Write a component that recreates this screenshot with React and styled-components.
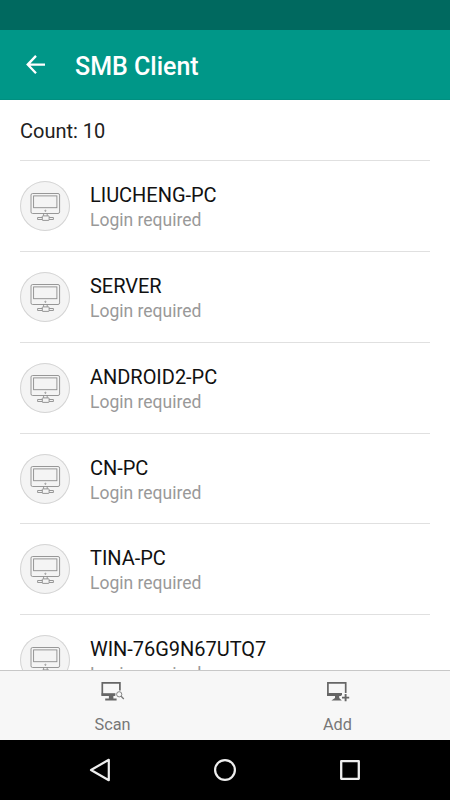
import React from 'react';
import styled, { createGlobalStyle } from 'styled-components';

const hosts = [
  'LIUCHENG-PC',
  'SERVER',
  'ANDROID2-PC',
  'CN-PC',
  'TINA-PC',
  'WIN-76G9N67UTQ7',
];

const BackIcon = () =>
<svg width="20" height="20" viewBox="0 0 20 20" fill="none" stroke="#fff" strokeWidth="2.3">
  <path d="M19 9.6H2.2M10 0.9L1.7 9.6L10 18.3" />
</svg>;

const ComputerIcon = () =>
<svg width="50" height="50" viewBox="0 0 50 50" fill="none" stroke="#8c8c8c" strokeWidth="0.9">
  <rect x="11" y="12.5" width="28.6" height="20" rx="1.6" />
  <rect x="13.6" y="14.9" width="23.3" height="11.8" />
  <circle cx="25.4" cy="29.8" r="0.6" />
  <path d="M23.6 32.6V34.8M27.2 32.6V34.8" />
  <rect x="22.3" y="34.9" width="6.8" height="4.5" rx="0.5" />
  <path d="M22.3 36.5H17.6V38.5H22.3M29.1 36.5H33.4V38.5H29.1" />
</svg>;

const ScanIcon = () =>
<svg width="26" height="24" viewBox="0.6 0 26 24" fill="none" stroke="#666">
  <path d="M20.5 10.5V2.8H2.9V15.2H15.5" strokeWidth="1.7" />
  <path d="M2.2 14.4H16" strokeWidth="2.4" />
  <path d="M9.5 16H14V18.6H17.2V20.4H5.8V18.6H9.5Z" fill="#666" stroke="none" />
  <circle cx="19.8" cy="14.3" r="2.6" stroke="#777" strokeWidth="0.9" />
  <path d="M21.7 16.3L24.4 19" stroke="#777" strokeWidth="1.3" />
</svg>;

const AddIcon = () =>
<svg width="26" height="24" viewBox="0 0 26 24" fill="none" stroke="#666">
  <path d="M20.7 13V2.8H2.9V15.2H16" strokeWidth="1.7" />
  <path d="M2.2 14.2H17" strokeWidth="2.4" />
  <path d="M10 16H14.2V18L16.8 20.6H6.4L10 18Z" fill="#666" stroke="none" />
  <path d="M17 17.6H24.2M20.6 14V21.2" strokeWidth="1.9" />
</svg>;

const NavBackIcon = () =>
<svg width="24" height="26" viewBox="0 0 24 26" fill="none" stroke="#eee" strokeWidth="2.2" strokeLinejoin="round">
  <path d="M20.8 2.8V23.2L3 13Z" />
</svg>;

const NavHomeIcon = () =>
<svg width="24" height="24" viewBox="0 0 24 24" fill="none" stroke="#eee" strokeWidth="2.2">
  <circle cx="12" cy="12" r="9.9" />
</svg>;

const NavRecentIcon = () =>
<svg width="24" height="24" viewBox="0 0 24 24" fill="none" stroke="#eee" strokeWidth="2.3" strokeLinejoin="round">
  <rect x="3.2" y="3.2" width="17.6" height="17.6" />
</svg>;

const App = () =>
<Screen>
  <GlobalStyle />
  <StatusBar />
  <Header>
    <BackIcon />
    <Title>SMB Client</Title>
  </Header>
  <Content>
    <Count>Count: 10</Count>
    {hosts.map(name =>
      <Host key={name}>
        <Avatar><ComputerIcon /></Avatar>
        <div>
          <HostName>{name}</HostName>
          <HostState>Login required</HostState>
        </div>
      </Host>
    )}
  </Content>
  <Toolbar>
    <Action><ScanIcon />Scan</Action>
    <Action><AddIcon />Add</Action>
  </Toolbar>
  <NavBar>
    <NavBackIcon />
    <NavHomeIcon />
    <NavRecentIcon />
  </NavBar>
</Screen>;

const GlobalStyle = createGlobalStyle`
  * {
    box-sizing: border-box;
  }
  body {
    margin: 0;
    font-family: Roboto, sans-serif;
  }
  svg {
    display: block;
    flex: none;
  }
`;

const Screen = styled.div`
  display: flex;
  flex-direction: column;
  width: 450px;
  height: 800px;
  overflow: hidden;
  background-color: #fff;
`;

const StatusBar = styled.div`
  flex: none;
  height: 30px;
  background-color: #00695f;
`;

const Header = styled.div`
  flex: none;
  display: flex;
  align-items: center;
  height: 70px;
  padding-left: 26px;
  background-color: #009788;
  border-bottom: 1px solid #008f80;
`;

const Title = styled.div`
  margin: 4px 0 0 29px;
  color: #fff;
  font-size: 25px;
  font-weight: 500;
  line-height: 30px;
`;

const Content = styled.div`
  flex: 1;
  min-height: 0;
  overflow: hidden;
  padding: 0 20px;
`;

const Count = styled.div`
  height: 60px;
  color: #212121;
  font-size: 20px;
  line-height: 63px;
`;

const Host = styled.div`
  display: flex;
  align-items: flex-start;
  height: 90.85px;
  padding-top: 20px;
  border-top: 1px solid #e0e0e0;
`;

const Avatar = styled.div`
  flex: none;
  width: 50px;
  height: 50px;
  margin-right: 20px;
  border-radius: 50%;
  background-color: #f4f4f4;
  box-shadow: inset 0 0 0 1px #d4d4d4;
`;

const HostName = styled.div`
  color: #111;
  font-size: 20px;
  line-height: 28px;
  letter-spacing: -.03px;
`;

const HostState = styled.div`
  color: #999;
  font-size: 17.5px;
  line-height: 23.6px;
`;

const Toolbar = styled.div`
  flex: none;
  display: flex;
  height: 70px;
  border-top: 1px solid #c8c8c8;
  background-color: #f7f7f7;
`;

const Action = styled.div`
  flex: 1;
  display: flex;
  flex-direction: column;
  align-items: center;
  gap: 11px;
  padding-top: 9px;
  color: #777;
  font-size: 16.3px;
  line-height: 20px;
`;

const NavBar = styled.div`
  flex: none;
  display: flex;
  align-items: center;
  justify-content: space-between;
  height: 60px;
  padding: 0 88px;
  background-color: #000;
`;

export default App;
